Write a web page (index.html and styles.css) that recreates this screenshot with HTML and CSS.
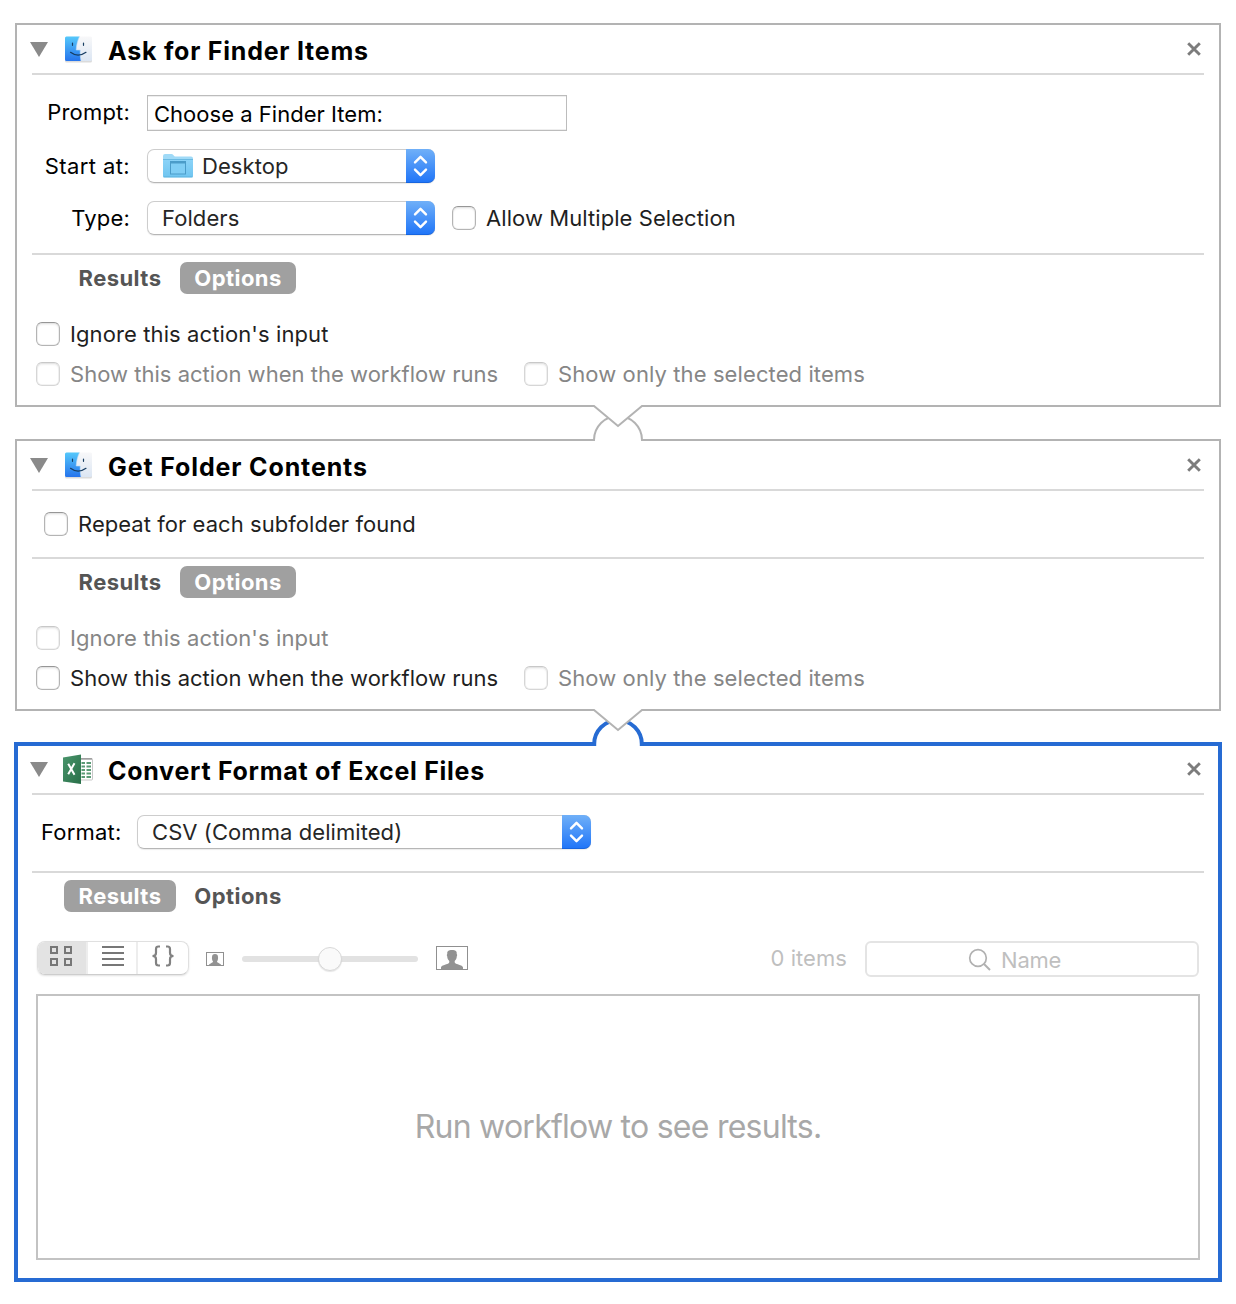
FILE: index.html
```
<!DOCTYPE html>
<html lang="en">
<head>
<meta charset="utf-8">
<title>Workflow</title>
<link rel="stylesheet" href="styles.css">
</head>
<body>
<svg class="defs" width="0" height="0">
  <defs>
    <linearGradient id="finderBlue" x1="0" y1="0" x2="0" y2="1"><stop offset="0" stop-color="#55c8fb"/><stop offset="1" stop-color="#2674ec"/></linearGradient>
    <linearGradient id="finderWhite" x1="0" y1="0" x2="0" y2="1"><stop offset="0" stop-color="#f8f8f9"/><stop offset="1" stop-color="#dce6f3"/></linearGradient>
    <linearGradient id="folderFront" x1="0" y1="0" x2="0" y2="1"><stop offset="0" stop-color="#8bd3f8"/><stop offset="1" stop-color="#6fc5f0"/></linearGradient>
    <linearGradient id="excelGreen" x1="0" y1="0" x2="1" y2="1"><stop offset="0" stop-color="#4a956c"/><stop offset="1" stop-color="#286f48"/></linearGradient>
    <symbol id="finder" viewBox="0 0 32 32">
      <rect x="3" y="3.500" width="27" height="25" rx="1.500" fill="#000" opacity=".14"/>
      <rect x="3" y="2.500" width="27" height="24.500" rx="1.500" fill="url(#finderWhite)"/>
      <path d="M4.500 2.500H17.500C15.500 6.500 14.400 11.500 14.200 16H18.200C18 20 18.300 23.500 19 27H4.500Q3 27 3 25.500V4Q3 2.500 4.500 2.500Z" fill="url(#finderBlue)"/>
      <path d="M17.500 2.500C15.500 6.500 14.400 11.500 14.200 16H18.200C18 20 18.300 23.500 19 27" fill="none" stroke="#bddcf5" stroke-width=".6"/>
      <path d="M10.500 9V11.300M21.500 9V11.300M8.500 18.300Q16 24 24 18.300" fill="none" stroke="#173d62" stroke-width="1.200" stroke-linecap="round"/>
    </symbol>
    <symbol id="close" viewBox="0 0 14 14"><path d="M1.200 1.200L12.800 12.800M12.800 1.200L1.200 12.800" stroke="#7c7c7c" stroke-width="2.900"/></symbol>
    <symbol id="triangle" viewBox="0 0 18 15"><path d="M0 0H18L9 15Z" fill="#8a8a8a"/></symbol>
    <symbol id="chevrons" viewBox="0 0 29 34"><path d="M9 13.400L14.500 7.800L20 13.400M9 20.600L14.500 26.200L20 20.600" fill="none" stroke="#fff" stroke-width="2.400" stroke-linecap="round" stroke-linejoin="round"/></symbol>
    <symbol id="person" viewBox="0 0 32 24">
      <rect x=".5" y=".5" width="31" height="23" fill="#fff" stroke="#909090"/>
      <path d="M5 23V21.500C5 19.500 10 18.500 12.300 17.500C13.400 17 13.600 15.800 13.100 14.800C11.800 13.300 11.300 12 11.200 10.200C10.700 9.500 10.700 8.500 11.300 8C10.900 5 12.500 4 16 4C19.500 4 21.100 5 20.700 8C21.300 8.500 21.300 9.500 20.800 10.200C20.700 12 20.200 13.300 18.900 14.800C18.400 15.800 18.600 17 19.700 17.500C22 18.500 27 19.500 27 21.500V23Z" fill="#929292"/>
    </symbol>
  </defs>
</svg>
<main class="workflow">
  <section class="action">
    <header class="action-header">
      <svg class="triangle"><use href="#triangle"/></svg>
      <svg class="app-icon"><use href="#finder"/></svg>
      <h2 class="title">Ask for Finder Items</h2>
      <svg class="close"><use href="#close"/></svg>
    </header>
    <div class="form">
      <div class="field row-prompt"><span class="label">Prompt:</span><div class="input">Choose a Finder Item:</div></div>
      <div class="field row-start"><span class="label label-start">Start at:</span>
        <div class="select"><svg class="folder" viewBox="0 0 32 26">
            <path d="M1 3Q1 1 3 1H9.500Q10.500 1 11.500 2.200L12.800 3.500H29Q31 3.500 31 5.500V10H1Z" fill="#a0daf7"/>
            <path d="M1 6.500H31V23Q31 24.500 29.500 24.500H2.500Q1 24.500 1 23Z" fill="url(#folderFront)"/>
            <path d="M1 6.500H31M1.500 23.800H30.500" stroke="#5fb2dc" stroke-width=".8"/>
            <rect x="8.500" y="8.500" width="15" height="12.500" fill="#80cef5" stroke="#4b9cc9"/><path d="M8.500 9.500H23.500" stroke="#4b9cc9" stroke-width="2"/>
          </svg><span>Desktop</span><span class="arrows"><svg><use href="#chevrons"/></svg></span></div>
      </div>
      <div class="field row-type"><span class="label">Type:</span>
        <div class="select"><span>Folders</span><span class="arrows"><svg><use href="#chevrons"/></svg></span></div>
        <label class="check multi"><i class="box"></i><span>Allow Multiple Selection</span></label>
      </div>
    </div>
    <nav class="tabs"><span class="tab">Results</span><span class="tab active">Options</span></nav>
    <div class="options">
      <label class="check"><i class="box"></i><span>Ignore this action's input</span></label>
      <div class="check-row">
        <label class="check disabled first"><i class="box"></i><span>Show this action when the workflow runs</span></label>
        <label class="check disabled"><i class="box"></i><span>Show only the selected items</span></label>
      </div>
    </div>
  </section>

  <div class="joint">
    <svg class="joint-shape" viewBox="0 0 56 44">
      <path d="M4 42V39A24 24 0 0 1 52 39V42Z" fill="#fff"/>
      <path d="M4 41V40A24 24 0 0 1 52 40V41" fill="none" stroke="#b3b3b3" stroke-width="2"/>
      <path d="M4 3V6L28 26L52 6V3Z" fill="#fff"/>
      <path d="M3 6H4L28 26L52 6H53" fill="none" stroke="#b3b3b3" stroke-width="2"/>
    </svg>
  </div>

  <section class="action">
    <header class="action-header">
      <svg class="triangle"><use href="#triangle"/></svg>
      <svg class="app-icon"><use href="#finder"/></svg>
      <h2 class="title title-contents">Get Folder Contents</h2>
      <svg class="close"><use href="#close"/></svg>
    </header>
    <div class="form form-repeat">
      <label class="check"><i class="box"></i><span>Repeat for each subfolder found</span></label>
    </div>
    <nav class="tabs"><span class="tab">Results</span><span class="tab active">Options</span></nav>
    <div class="options">
      <label class="check disabled"><i class="box"></i><span>Ignore this action's input</span></label>
      <div class="check-row">
        <label class="check first"><i class="box"></i><span>Show this action when the workflow runs</span></label>
        <label class="check disabled"><i class="box"></i><span>Show only the selected items</span></label>
      </div>
    </div>
  </section>

  <div class="joint joint-selected">
    <svg class="joint-shape" viewBox="0 0 56 44">
      <path d="M4 43V39A24 24 0 0 1 52 39V43Z" fill="#fff"/>
      <path d="M4.200 42V40A23.800 23.800 0 0 1 51.800 40V42" fill="none" stroke="#266bd3" stroke-width="4"/>
      <path d="M4 3V6L28 26L52 6V3Z" fill="#fff"/>
      <path d="M3 6H4L28 26L52 6H53" fill="none" stroke="#b3b3b3" stroke-width="2"/>
    </svg>
  </div>

  <section class="action selected">
    <header class="action-header">
      <svg class="triangle"><use href="#triangle"/></svg>
      <svg class="app-icon excel" viewBox="0 0 32 32">
        <path d="M15 5.500H29.500Q30.500 5.500 30.500 6.500V26Q30.500 27 29.500 27H15Z" fill="#fff" stroke="#b9b9b9" stroke-width=".8"/>
        <path d="M19 6H30" stroke="#777" stroke-width="1"/>
        <path d="M19.500 10H23M24.500 10H29M19.500 13.500H23M24.500 13.500H29M19.500 17H23M24.500 17H29M19.500 20.500H23M24.500 20.500H29M19.500 24H23M24.500 24H29" stroke="#5a9a75" stroke-width="2"/>
        <path d="M1 4.500L19 1.500V31L1 28.500Z" fill="url(#excelGreen)"/>
        <path d="M6.200 10.700L12.500 21.800M12.500 10.200L6.200 21.300" stroke="#fff" stroke-width="2"/>
      </svg>
      <h2 class="title title-convert">Convert Format of Excel Files</h2>
      <svg class="close"><use href="#close"/></svg>
    </header>
    <div class="form form-format">
      <span class="label">Format:</span>
      <div class="select wide"><span>CSV (Comma delimited)</span><span class="arrows"><svg><use href="#chevrons"/></svg></span></div>
    </div>
    <nav class="tabs tabs-results"><span class="tab active">Results</span><span class="tab">Options</span></nav>
    <div class="toolbar">
      <div class="segments">
        <span class="segment on"><svg viewBox="0 0 24 22"><path d="M2 2H8V8H2ZM16 2H22V8H16ZM2 14H8V20H2ZM16 14H22V20H16Z" fill="none" stroke="#777" stroke-width="2"/></svg></span>
        <span class="segment"><svg viewBox="0 0 24 22"><path d="M1 2H23M1 8H23M1 14H23M1 20H23" stroke="#777" stroke-width="2"/></svg></span>
        <span class="segment"><svg viewBox="0 0 24 22"><path d="M9 1.500H7.500Q5 1.500 5 4V8Q5 11 1.500 11Q5 11 5 14V18Q5 20.500 7.500 20.500H9M15 1.500H16.500Q19 1.500 19 4V8Q19 11 22.500 11Q19 11 19 14V18Q19 20.500 16.500 20.500H15" fill="none" stroke="#828282" stroke-width="2.200"/></svg></span>
      </div>
      <svg class="person-small" viewBox="0 0 18 14"><rect x=".5" y=".5" width="17" height="13" fill="#fff" stroke="#909090"/><path d="M3 13C3 11.500 7 11 7 9.500C6 8 5.800 6.500 6 5C6 3 7 2 9 2S12 3 12 5C12.200 6.500 12 8 11 9.500C11 11 15 11.500 15 13Z" fill="#929292"/></svg>
      <div class="slider"><span class="knob"></span></div>
      <svg class="person-large"><use href="#person"/></svg>
      <span class="count">0 items</span>
      <div class="search"><svg viewBox="0 0 24 24"><circle cx="10" cy="10" r="8.300" fill="none" stroke="#b1b1b1" stroke-width="1.700"/><path d="M16 16L22 22" stroke="#b1b1b1" stroke-width="2"/></svg><span>Name</span></div>
    </div>
    <div class="results"><span>Run workflow to see results.</span></div>
  </section>
</main>
</body>
</html>
```
FILE: styles.css
```
* { box-sizing: border-box; }
body { margin: 0; background: #fff; color: #000; font: 22px/28px Inter, "Liberation Sans", sans-serif; letter-spacing: .07px; white-space: nowrap; }
svg { display: block; flex: none; }
.defs { position: absolute; }
.workflow { height: 1304px; padding: 23px 15px 0; }

.action { border: 2px solid #b3b3b3; padding: 0 15px; height: 384px; background: #fff; }
.joint + .action { height: 272px; }
.joint + .action.selected { height: 540px; margin: 0 -1px; border: 4px solid #266bd3; padding: 0 14px; }

.action-header { height: 50px; border-bottom: 2px solid #d9d9d9; display: flex; align-items: center; padding: 2px 3px 0 0; }
.selected .action-header { height: 49px; padding-top: 1px; }
.triangle { width: 18px; height: 15px; margin: -2px 0 0 -2px; }
.app-icon { width: 32px; height: 32px; margin: -1px 0 0 14px; }
.excel { margin-top: -3px; }
.title { margin: 1px 0 0 14px; font-size: 25px; line-height: 30px; font-weight: 700; letter-spacing: .77px; flex: 1; }
.title-contents { letter-spacing: .87px; }
.title-convert { letter-spacing: .72px; }
.close { width: 14px; height: 14px; margin-top: -3px; }

.form { height: 180px; border-bottom: 2px solid #d9d9d9; padding-top: 20px; }
.field { display: flex; align-items: center; height: 36px; }
.row-start { margin-top: 17px; }
.row-type { margin-top: 16px; }
.label { width: 98px; text-align: right; margin-right: 17px; letter-spacing: .2px; }
.label-start { letter-spacing: .4px; }
.row-prompt .label { margin-top: -2px; }
.input { width: 420px; height: 36px; border: 1px solid #bcbcbc; padding: 4px 6px; box-shadow: inset 0 -1px #eee, inset 0 1px #eee; letter-spacing: .02px; }
.select { width: 288px; height: 34px; border: 1px solid #cdcdcd; border-bottom-color: #b6b6b6; border-radius: 7px; display: flex; align-items: center; padding-left: 14px; color: #262626; box-shadow: 0 1px 1px rgba(0,0,0,.08); }
.arrows { width: 29px; height: 34px; margin: -1px -1px -1px auto; border-radius: 0 7px 7px 0; background: linear-gradient(#70b0f8, #2176f8); border-bottom: 1px solid #1765df; }
.arrows svg { width: 29px; height: 34px; }
.folder { width: 32px; height: 26px; margin: 0 8px 0 0; }

.check { display: flex; align-items: center; gap: 10px; height: 24px; color: #1f1f1f; letter-spacing: .1px; }
.box { width: 24px; height: 24px; flex: none; border: 1px solid #b4b4b4; border-top-color: #969696; border-radius: 6px; box-shadow: inset 0 2px 2px rgba(0,0,0,.06), inset 0 0 0 1px #f3f3f3; }
.disabled { color: #868686; }
.disabled .box { border-color: #d6d6d6; border-top-color: #c8c8c8; }
.multi { margin-left: 17px; letter-spacing: .07px; }
.form-repeat { height: 68px; padding: 21px 0 0 12px; }
.form-repeat .check { letter-spacing: .05px; }

.tabs { display: flex; gap: 4px; padding: 7px 0 0 32px; height: 39px; }
.tab { height: 32px; border-radius: 7px; font-weight: 700; color: #555; width: 112px; text-align: center; line-height: 32px; letter-spacing: .45px; }
.tab + .tab { width: 116px; }
.tab.active { background: #a0a0a0; color: #fff; }
.options { padding: 28px 0 0 4px; }
.check-row { display: flex; margin-top: 16px; }
.first { width: 488px; letter-spacing: .02px; }

.joint { height: 32px; display: flex; justify-content: center; position: relative; }
.joint-selected { height: 31px; }
.joint-shape { width: 56px; height: 44px; position: absolute; top: -7px; left: 575px; }

.form-format { height: 78px; padding: 19px 0 0 9px; display: flex; align-items: flex-start; }
.form-format .label { width: 81px; text-align: left; margin: 4px 15px 0 0; }
.wide { width: 454px; margin-top: 1px; }

.toolbar { display: flex; align-items: center; margin-top: 28px; padding: 0 5px; height: 37px; }
.segments { display: flex; width: 152px; height: 34px; margin-top: -2px; border: 1px solid #e0e0e0; border-bottom-color: #cdcdcd; border-radius: 8px; overflow: hidden; box-shadow: 0 1px 2px rgba(0,0,0,.12); }
.segment { width: 50px; padding: 4px 0 0 13px; border-left: 2px solid #ededed; }
.segment.on { width: 48px; padding-left: 11px; border: 0; background: #e3e3e3; }
.segment svg { width: 24px; height: 22px; margin-top: -1px; }
.segment:last-child { width: 52px; }
.person-small { width: 18px; height: 14px; margin: 1px 0 0 17px; }
.slider { width: 176px; height: 6px; margin: 1px 18px 0; border-radius: 3px; background: #e2e2e2; display: flex; justify-content: center; align-items: center; }
.knob { width: 24px; height: 24px; border-radius: 50%; background: #fafafa; border: 1px solid #d8d8d8; box-shadow: 0 1px 1px rgba(0,0,0,.1); }
.person-large { width: 32px; height: 24px; margin-top: -1px; }
.count { margin: -2px 0 0 auto; color: #bfbfbf; }
.search { width: 334px; height: 36px; margin-left: 18px; border: 2px solid #e4e4e4; border-radius: 6px; display: flex; align-items: center; padding-left: 101px; color: #bfbfbf; letter-spacing: -.2px; }
.search svg { width: 24px; height: 24px; margin: 3px 9px 0 0; }
.search span { margin-top: 2px; }
.results { margin: 17px 4px 0; height: 266px; border: 2px solid #c3c3c3; display: flex; justify-content: center; align-items: center; font-size: 32px; letter-spacing: -.75px; color: #a8a8a8; }
```
